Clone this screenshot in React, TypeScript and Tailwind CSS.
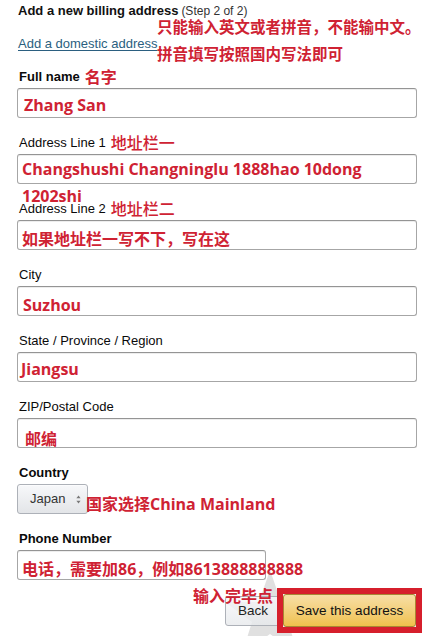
import React from "react";

const RED = "text-[#cf2233]";
const REDFONT = "font-['Open_Sans','Noto_Sans_CJK_SC',sans-serif]";

function Label({ text, bold, note, noteClass }: { text: string; bold?: boolean; note?: string; noteClass?: string }) {
  return (
    <div className="flex items-center h-[18px] pl-[2px] mb-[2px]">
      <span className={`text-[13px] leading-[18px] text-[#0a0a0a] whitespace-nowrap ${bold ? "font-bold" : "font-normal"}`}>{text}</span>
      {note ? (
        <span className={`ml-[5px] text-[16px] leading-[22px] whitespace-nowrap ${RED} ${REDFONT} ${noteClass ?? "font-bold"}`}>{note}</span>
      ) : null}
    </div>
  );
}

function Box({ children, className }: { children?: React.ReactNode; className?: string }) {
  return (
    <div
      className={`h-[30px] border border-[#a6a6a6] border-t-[#949494] rounded-[3px] bg-white shadow-[inset_0_1px_0_rgba(0,0,0,0.07)] ${className ?? "w-[400px]"}`}
    >
      {children}
    </div>
  );
}

function Value({ text, className }: { text: string; className: string }) {
  return (
    <div className="flex items-center h-full">
      <span className={`text-[16px] leading-[22px] font-bold whitespace-nowrap ${RED} ${REDFONT} ${className}`}>{text}</span>
    </div>
  );
}

export default function App() {
  return (
    <div className="relative w-[431px] h-[636px] overflow-hidden bg-white font-['Liberation_Sans',Arial,sans-serif] text-[#111] text-[13px] leading-[18px]">
      {/* header */}
      <div className="pl-[18px] pt-[2px]">
        <div className="h-[18px] flex items-center whitespace-nowrap">
          <span className="text-[13px] font-bold">Add a new billing address</span>
          <span className="ml-[3px] text-[12px] text-[#333]">(Step 2 of 2)</span>
        </div>
        <div className="mt-[15px] h-[18px] flex items-center">
          <span className="text-[13px] text-[#2b5f80] underline decoration-[#2b5f80] underline-offset-2">Add a domestic address</span>
        </div>
      </div>

      {/* annotations over header */}
      <div className={`absolute left-[157px] top-[14px] text-[15.5px] leading-[27px] font-bold whitespace-nowrap ${RED} ${REDFONT}`}>
        <div>只能输入英文或者拼音，不能输中文。</div>
        <div>拼音填写按照国内写法即可</div>
      </div>

      {/* form */}
      <div className="mt-[15px] px-[17px] flex flex-col gap-[16px]">
        <div>
          <Label text="Full name" bold note="名字" />
          <Box>
            <Value text="Zhang San" className="pl-[6px] translate-y-[2px]" />
          </Box>
        </div>

        <div>
          <Label text="Address Line 1" note="地址栏一" noteClass="font-medium" />
          <Box>
            <div className={`pl-[4px] pt-[1px] text-[16px] leading-[27px] font-bold whitespace-nowrap ${RED} ${REDFONT}`}>
              Changshushi Changninglu 1888hao 10dong
              <br />
              1202shi
            </div>
          </Box>
        </div>

        <div>
          <Label text="Address Line 2" note="地址栏二" noteClass="font-medium" />
          <Box>
            <Value text="如果地址栏一写不下，写在这" className="pl-[4px] translate-y-[4px]" />
          </Box>
        </div>

        <div>
          <Label text="City" />
          <Box>
            <Value text="Suzhou" className="pl-[5px] translate-y-[4px]" />
          </Box>
        </div>

        <div>
          <Label text="State / Province / Region" />
          <Box>
            <Value text="Jiangsu" className="pl-[3px] translate-y-[2px]" />
          </Box>
        </div>

        <div>
          <Label text="ZIP/Postal Code" />
          <Box>
            <Value text="邮编" className="pl-[7px] translate-y-[6px]" />
          </Box>
        </div>

        <div>
          <Label text="Country" bold />
          <div className="flex items-center">
            <div className="flex items-center w-[71px] h-[30px] pl-[12px] border border-[#adb1b8] rounded-[3px] bg-gradient-to-b from-[#f7f8fa] to-[#e3e5e8] shadow-[0_1px_0_rgba(255,255,255,0.6)_inset]">
              <span className="text-[13px] text-[#333]">Japan</span>
              <svg className="ml-[11px]" width="5" height="9" viewBox="0 0 5 9">
                <path d="M2.5 0.5 L4.6 3.2 L0.4 3.2 Z" fill="#777" />
                <path d="M2.5 8.5 L4.6 5.8 L0.4 5.8 Z" fill="#777" />
              </svg>
            </div>
            <span className={`-ml-[2px] translate-y-[5px] text-[16px] leading-[22px] font-bold whitespace-nowrap ${RED} ${REDFONT}`}>
              国家选择China Mainland
            </span>
          </div>
        </div>

        <div>
          <Label text="Phone Number" bold />
          <Box className="w-[249px]">
            <Value text="电话，需要加86，例如8613888888888" className="pl-[4px] translate-y-[4px]" />
          </Box>
        </div>
      </div>

      {/* watermark star */}
      <svg className="absolute left-[222px] top-[566px] opacity-30" width="96" height="90" viewBox="0 0 96 90">
        <path d="M48 4 L59 36 L93 36 L66 56 L76 88 L48 68 L20 88 L30 56 L3 36 L37 36 Z" fill="#9a9a9a" />
      </svg>

      {/* bottom buttons */}
      <div className="relative mt-[8px] pr-[9px] flex justify-end items-start">
        <div className="mt-[8px] w-[60px] h-[30px] pl-[12px] flex items-center border border-[#adb1b8] rounded-[3px] bg-gradient-to-b from-[#f7f8fa]/80 to-[#e7e9ec]/80">
          <span className="text-[13.5px] text-[#222]">Back</span>
        </div>
        <div className="relative -ml-[8px] w-[145px] h-[45px] border-[6px] border-[#d61f2c] bg-[#f2f2f2]">
          <div className="h-full w-full flex items-center justify-center border border-[#a88734] rounded-[3px] bg-gradient-to-b from-[#f7dfa5] to-[#f0c14b]">
            <span className="text-[13.5px] text-[#111]">Save this address</span>
          </div>
        </div>
        <span className={`absolute left-[193px] top-[-3px] z-10 text-[16px] leading-[22px] font-bold whitespace-nowrap ${RED} ${REDFONT}`}>
          输入完毕点
        </span>
      </div>
    </div>
  );
}
